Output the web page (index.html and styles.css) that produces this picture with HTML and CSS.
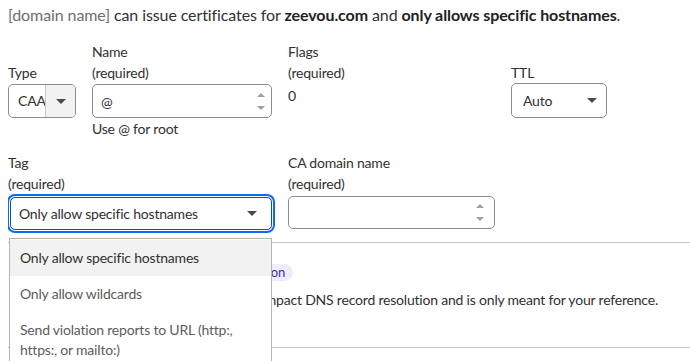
FILE: index.html
```html
<!DOCTYPE html>
<html lang="en">

<head>
    <meta charset="UTF-8">
    <title>CAA record</title>
    <link rel="stylesheet" href="styles.css">
</head>

<body>

    <p class="summary">
        <span class="muted">[domain name]</span> can issue certificates for <b>zeevou.com</b> and
        <b>only allows specific hostnames</b>.
    </p>

    <!-- First row: type, name, flags, ttl -->
    <div class="fields row-one">
        <label class="label">Type</label>
        <label class="label">Name<br>(required)</label>
        <label class="label">Flags<br>(required)</label>
        <label class="label">TTL</label>

        <div class="type-select">
            <span class="type-value">CAA</span>
            <span class="type-toggle"><span class="caret"></span></span>
        </div>
        <div class="number-input">
            <span class="input-value">@</span>
            <span class="spinner"><span class="up"></span><span class="down"></span></span>
        </div>
        <div class="flags-value">0</div>
        <div class="select ttl-select">
            <span>Auto</span>
            <span class="caret"></span>
        </div>

        <div class="hint">Use @ for root</div>
    </div>

    <!-- Second row: tag and CA domain -->
    <div class="fields row-two">
        <label class="label tag-label">Tag<br>(required)</label>
        <label class="label">CA domain name<br>(required)</label>

        <div class="select tag-select">
            <span>Only allow specific hostnames</span>
            <span class="caret"></span>
        </div>
        <div class="number-input ca-input">
            <span class="input-value"></span>
            <span class="spinner"><span class="up"></span><span class="down"></span></span>
        </div>
    </div>

    <!-- Section below, partly covered by the open menu -->
    <div class="attributes">
        <div class="badge-row"><span class="badge">Documentation</span></div>
        <p class="note">This comment does not impact DNS record resolution and is only meant for your reference.</p>
    </div>

    <!-- Open tag menu -->
    <ul class="menu">
        <li class="active">Only allow specific hostnames</li>
        <li>Only allow wildcards</li>
        <li>Send violation reports to URL (http:, https:, or mailto:)</li>
    </ul>

</body>

</html>
```

FILE: styles.css
```css
body {
    margin: 0 0 0 8px;
    font-family: Lato, "Noto Sans", sans-serif;
    font-size: 14px;
    letter-spacing: -0.2px;
    color: #313131;
    overflow: hidden;
    position: relative;
    height: 361px;
}

.summary {
    margin: 4px 0 15px;
    font-size: 16px;
    line-height: 22px;
    letter-spacing: -0.1px;
}

.summary b {
    font-weight: 700;
    color: #222;
}

.muted {
    color: #6e6e6e;
}

.fields {
    display: grid;
    grid-template-columns: 68px 180px 207px 96px;
    column-gap: 16px;
    line-height: 21px;
}

.label {
    align-self: end;
}

.row-one .label {
    margin-bottom: 1px;
}

.hint {
    grid-column: 2;
}

.type-select {
    display: flex;
    height: 34px;
    border: 1px solid #8c8c8c;
    border-radius: 5px;
    box-sizing: border-box;
    overflow: hidden;
}

.type-value {
    width: 37px;
    padding-left: 9px;
    box-sizing: border-box;
    line-height: 32px;
    overflow: hidden;
    white-space: nowrap;
    border-right: 1px solid #c8c8c8;
}

.type-toggle {
    flex: 1;
    background-color: #f2f2f2;
    display: flex;
    align-items: center;
    justify-content: center;
}

.caret {
    width: 0;
    height: 0;
    border-left: 5px solid transparent;
    border-right: 5px solid transparent;
    border-top: 5px solid #4a4a4a;
}

.number-input {
    display: flex;
    align-items: center;
    justify-content: space-between;
    height: 34px;
    padding: 0 6px 0 8px;
    border: 1px solid #8c8c8c;
    border-radius: 5px;
    box-sizing: border-box;
}

.spinner {
    display: flex;
    flex-direction: column;
    gap: 9px;
}

.spinner .up,
.spinner .down {
    width: 0;
    height: 0;
    border-left: 4px solid transparent;
    border-right: 4px solid transparent;
}

.spinner .up {
    border-bottom: 4px solid #a0a0a0;
}

.spinner .down {
    border-top: 4px solid #a0a0a0;
}

.flags-value {
    padding-top: 1px;
}

.select {
    display: flex;
    align-items: center;
    justify-content: space-between;
    border: 1px solid #8c8c8c;
    border-radius: 5px;
    box-sizing: border-box;
}

.ttl-select {
    height: 35px;
    padding: 0 9px 0 11px;
    margin-top: -1px;
}

.row-two {
    margin-top: 13px;
}

.tag-label {
    grid-column: span 2;
}

.tag-select {
    grid-column: span 2;
    height: 33px;
    margin: 3px 0 0 2px;
    padding: 0 14px 0 8px;
    border-color: #0051c3;
    box-shadow: 0 0 0 1px #fff, 0 0 0 3px #0a6cf2;
}

.ca-input {
    height: 33px;
    margin-top: 2px;
    padding-right: 10px;
}

.attributes {
    margin-top: 12px;
    border-top: 1px solid #c6c6c6;
    border-bottom: 1px solid #c6c6c6;
    margin-right: -2px;
    padding: 20px 0 37px;
    white-space: nowrap;
}

.badge-row {
    width: 285px;
    text-align: right;
}

.badge {
    display: inline-block;
    padding: 0 8px;
    font-size: 13px;
    line-height: 17px;
    color: #3a2eb0;
    background-color: #eeedfd;
    border-radius: 9px;
}

.note {
    width: 650px;
    margin: 8px 0 0;
    line-height: 21px;
    text-align: right;
}

.menu {
    position: absolute;
    top: 238px;
    left: 1px;
    width: 263px;
    margin: 0;
    padding: 1px 0 0;
    list-style: none;
    background-color: #fff;
    border: 1px solid #b4b4b4;
    box-sizing: border-box;
    height: 140px;
}

.menu li {
    padding: 8px 10px;
    line-height: 20px;
    color: #5c5c5c;
}

.menu li.active {
    background-color: #f2f2f2;
    color: #313131;
}
```
